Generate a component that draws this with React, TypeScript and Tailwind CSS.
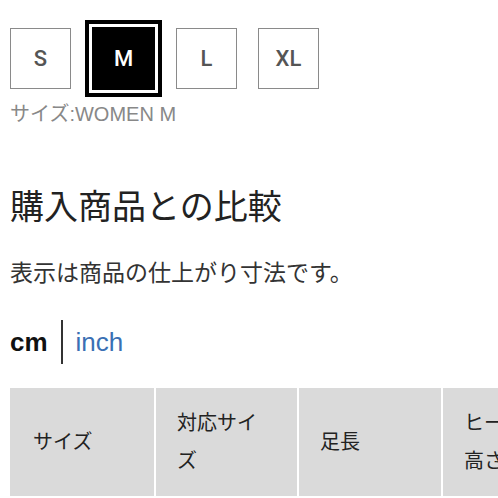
import React from "react";

const sizes = ["S", "M", "L", "XL"];
const selected = "M";

const jp = "font-['Liberation_Sans','Noto_Sans_CJK_JP',sans-serif]";

function SizeBox({ label, active }: { label: string; active: boolean }) {
  if (active) {
    return (
      <div className="flex h-[63px] w-[63px] items-center justify-center bg-black shadow-[0_0_0_3px_#fff,0_0_0_7px_#000]">
        <span className="font-['Roboto',sans-serif] text-[22px] font-medium text-white">{label}</span>
      </div>
    );
  }
  return (
    <div className="flex h-[61px] w-[61px] items-center justify-center border-[1.5px] border-[#8a8a8a] bg-white">
      <span className="font-['Roboto',sans-serif] text-[22px] font-medium text-[#555]">{label}</span>
    </div>
  );
}

export default function App() {
  return (
    <div className={`h-[498px] w-[498px] overflow-hidden bg-white pl-[10px] ${jp}`}>
      {/* size picker */}
      <div className="flex items-center gap-[21px] pt-[27px]">
        {sizes.map((s) => (
          <SizeBox key={s} label={s} active={s === selected} />
        ))}
      </div>
      <p className="mt-[10px] text-[20px] leading-[28px] text-[#888]">サイズ:WOMEN M</p>

      <h2 className="mt-[57px] text-[34px] font-normal leading-[44px] text-[#222]">
        購入商品との比較
      </h2>
      <p className="mt-[28px] text-[23px] leading-[32px] text-[#333]">表示は商品の仕上がり寸法です。</p>

      {/* unit switch */}
      <div className="mt-[31px] flex items-center">
        <span className="font-['Liberation_Sans',sans-serif] text-[26px] font-bold text-[#111]">cm</span>
        <span className="mx-[13px] h-[44px] w-[2px] bg-[#333]" />
        <span className="font-['Liberation_Sans',sans-serif] text-[26px] text-[#3a70b4]">inch</span>
      </div>

      {/* comparison table */}
      <table className="mt-[24px] w-[640px] table-fixed border-collapse text-[20px] leading-[38px] text-[#222]">
        <colgroup>
          <col className="w-[145px]" />
          <col className="w-[143px]" />
          <col className="w-[144px]" />
          <col className="w-[144px]" />
          <col className="w-[64px]" />
        </colgroup>
        <tbody>
          <tr className="h-[109px] bg-[#dadada]">
            <th className="border-r-2 border-b-2 border-white pl-[23px] pr-[21px] text-left font-normal">サイズ</th>
            <th className="border-r-2 border-b-2 border-white px-[21px] text-left font-normal">対応サイズ</th>
            <th className="border-r-2 border-b-2 border-white px-[21px] text-left font-normal">足長</th>
            <th className="border-r-2 border-b-2 border-white px-[21px] text-left font-normal">
              ヒール
              <br />
              高さ
            </th>
            <th className="border-b-2 border-white px-[21px] text-left font-normal">幅</th>
          </tr>
        </tbody>
      </table>
    </div>
  );
}
